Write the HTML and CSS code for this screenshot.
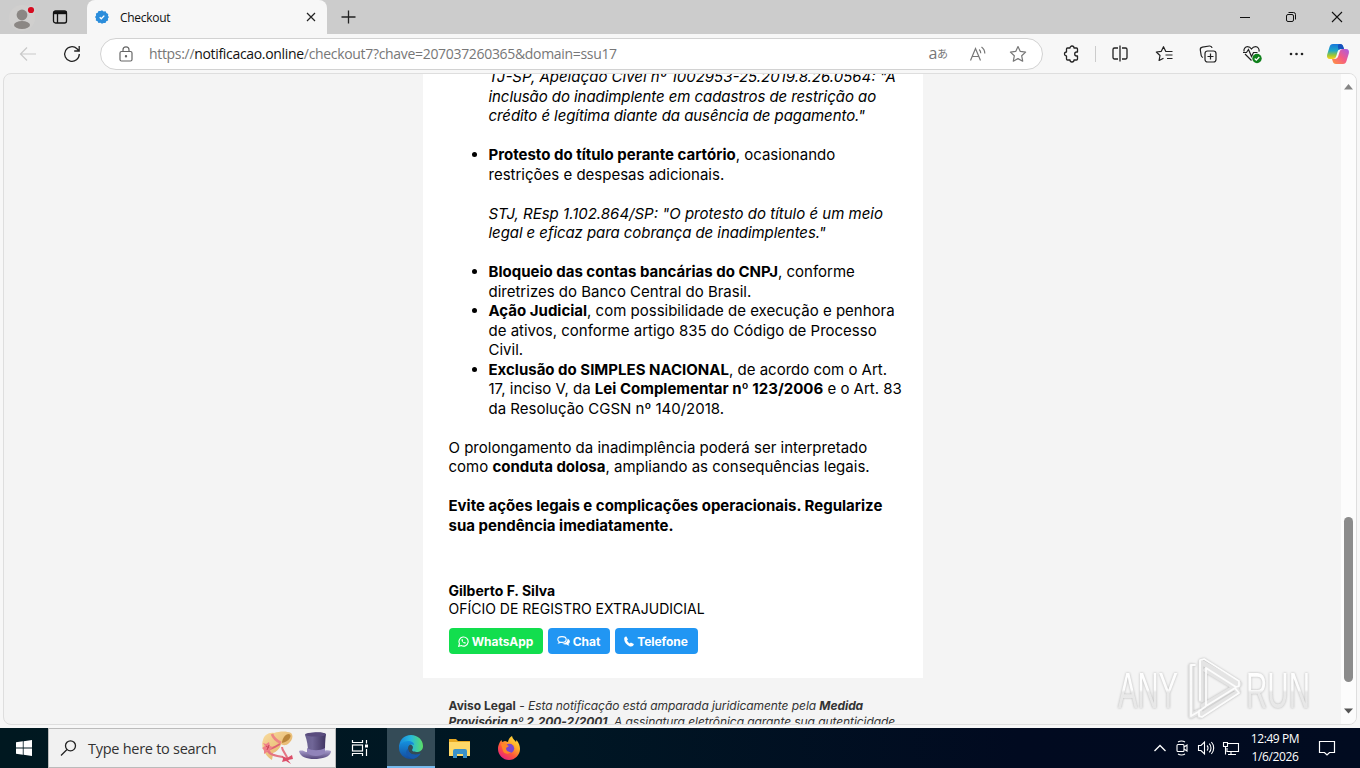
FILE: index.html
```html
<!DOCTYPE html>
<html lang="pt-BR">
<head>
<meta charset="utf-8">
<title>Checkout</title>
<link rel="stylesheet" href="styles.css">
</head>
<body>
<div class="screen">
  <header class="tabbar">
    <div class="cell avatar"><svg width="28" height="30" viewBox="0 0 28 30"><circle cx="14" cy="15" r="13" fill="#d0cfce"/><circle cx="14" cy="12" r="5.400" fill="#8b8784"/><ellipse cx="14" cy="22" rx="8" ry="4" fill="#8b8784"/><circle cx="23" cy="7" r="4.500" fill="#d2d0d0"/><circle cx="23" cy="7" r="3.100" fill="#d60b20"/></svg></div>
    <div class="cell spaces"><svg width="16" height="16" viewBox="0 0 16 16" fill="none" stroke="#111" stroke-width="1.300"><rect x="1.500" y="2" width="13" height="12" rx="2"/><path d="M1.500 3.700h13" stroke-width="3"/><path d="M5.500 4v10"/></svg></div>
    <div class="tab">
      <svg width="14" height="14" viewBox="0 0 14 14"><path d="M7 .3l1.600 1.200 2-.2.800 1.800 1.800.800-.2 2L14 7l-1.100 1.500.2 2-1.800.8-.8 1.800-2-.2L7 13.800l-1.600-1-2 .2-.8-1.800-1.800-.8.2-2L0 7l1.100-1.500-.2-2 1.800-.8.800-1.800 2 .2z" fill="#2b8ddb"/><path d="M4.700 7.200l1.600 1.600 3-3.200" fill="none" stroke="#fff" stroke-width="1.300"/></svg>
      <span class="tab-title">Checkout</span>
      <svg class="tab-close" width="12" height="12" viewBox="0 0 12 12" stroke="#222" stroke-width="1.200"><path d="M2 2l8 8M10 2l-8 8"/></svg>
    </div>
    <div class="cell plus"><svg width="16" height="16" viewBox="0 0 16 16" stroke="#222" stroke-width="1.300"><path d="M8.500 1.500v13M1.500 8h14"/></svg></div>
    <div class="winbtns">
      <svg width="12" height="12" viewBox="0 0 12 12" stroke="#111"><path d="M1 6.500h10"/></svg>
      <svg width="12" height="12" viewBox="0 0 12 12" fill="none" stroke="#111"><rect x="1.500" y="3.500" width="7" height="7" rx="1.500"/><path d="M3.500 1.500h5a2 2 0 0 1 2 2v5"/></svg>
      <svg width="12" height="12" viewBox="0 0 12 12" stroke="#111" stroke-width="1.100"><path d="M1 1l10 10M11 1L1 11"/></svg>
    </div>
  </header>

  <nav class="toolbar">
    <div class="tool"><svg width="18" height="16" viewBox="0 0 18 16" fill="none" stroke="#c9c9c9" stroke-width="1.200"><path d="M17 8H2M8 1.500L1.500 8 8 14.500"/></svg></div>
    <div class="tool"><svg width="18" height="18" viewBox="0 0 18 18" fill="none" stroke="#222" stroke-width="1.300"><path d="M16.300 9A7.300 7.300 0 1 1 14 3.700L16 5.700M16.200 1v5h-5"/></svg></div>
    <div class="address">
      <svg class="lock" width="14" height="16" viewBox="0 0 14 16" fill="none" stroke="#666" stroke-width="1.200"><rect x="1" y="5.500" width="12" height="9.500" rx="1.500"/><path d="M4 5.500V3.800a3 3 0 0 1 6 0v1.700"/><circle cx="7" cy="10.200" r=".6" fill="#666"/></svg>
      <span class="url">https://<b>notificacao.online</b>/checkout7?chave=207037260365&amp;domain=ssu17</span>
      <div class="addr-tool translate">a<small>あ</small></div>
      <div class="addr-tool"><svg width="18" height="16" viewBox="0 0 18 16" fill="none" stroke="#777" stroke-width="1.200"><path d="M1.500 14.500L6.500 2.500l5 12M3.300 10.500h6.500M10.200 3.500a4.500 4.500 0 0 1 1.500 3.700M12.500 1a8 8 0 0 1 3.300 6.500"/></svg></div>
      <div class="addr-tool"><svg width="18" height="18" viewBox="0 0 18 18" fill="none" stroke="#777" stroke-width="1.200" stroke-linejoin="round"><path d="M9 1.500l2.300 4.900 5.300.7-3.900 3.700 1 5.400L9 13.600l-4.700 2.600 1-5.400-3.900-3.700 5.300-.7z"/></svg></div>
    </div>
    <div class="tool ext"><svg width="18" height="18" viewBox="0 0 18 18" fill="none" stroke="#222" stroke-width="1.300" stroke-linejoin="round"><path d="M5.500 3H8a2 2 0 0 1 4 0h2.500a1 1 0 0 1 1 1v3h-.8a2 2 0 0 0 0 4h.8v3a1 1 0 0 1-1 1H12a2 2 0 0 1-4 0H5.500a1 1 0 0 1-1-1v-3a2 2 0 0 1 0-4V4a1 1 0 0 1 1-1z"/></svg></div>
    <span class="divider"></span>
    <div class="tool"><svg width="18" height="18" viewBox="0 0 18 18" fill="none" stroke="#222" stroke-width="1.300"><path d="M7 3H3.500A1.500 1.500 0 0 0 2 4.500v8A1.500 1.500 0 0 0 3.500 14H7M11 3h3.500A1.500 1.500 0 0 1 16 4.500v8a1.500 1.500 0 0 1-1.500 1.500H11M9 .5v16"/></svg></div>
    <div class="tool"><svg width="18" height="18" viewBox="0 0 18 18" fill="none" stroke="#222" stroke-width="1.200" stroke-linejoin="round"><path d="M11 6.500h-.2L8.500 1.700 6.300 6.300l-5 .7L5 10.500l-.9 5 4.400-2.300M11 6.500h6.500M10.500 10h7M12 13.500h5.500"/></svg></div>
    <div class="tool"><svg width="18" height="18" viewBox="0 0 18 18" fill="none" stroke="#222" stroke-width="1.200"><rect x="6" y="6" width="11" height="11" rx="2.500"/><path d="M11.500 8.500v6M8.500 11.500h6M4 12.500a2.500 2.500 0 0 1-1.800-2L1.300 5A2.500 2.500 0 0 1 3.400 2.200l7-1.200a2.500 2.500 0 0 1 2.700 2"/></svg></div>
    <div class="tool"><svg width="20" height="20" viewBox="0 0 20 20" fill="none" stroke="#222" stroke-width="1.200"><path d="M9.500 16.500L3 10M2 7.500C1.500 5 3.300 2.700 5.500 2.700c1.800 0 3 .8 4 2.300 1-1.500 2.200-2.300 4-2.300 2.500 0 4.200 2.500 3.500 5M1 8.500h3.500L6.500 5.500l3 7 2-4h4"/><circle cx="15" cy="14.500" r="4.700" fill="#10801c" stroke="none"/><path d="M12.700 14.500l1.600 1.700 3-3.200" stroke="#fff"/></svg></div>
    <div class="tool"><svg width="16" height="4" viewBox="0 0 16 4" fill="#222"><circle cx="3" cy="2" r="1.300"/><circle cx="8.500" cy="2" r="1.300"/><circle cx="14" cy="2" r="1.300"/></svg></div>
    <div class="tool copilot"><svg width="24" height="22" viewBox="0 0 24 22"><defs><linearGradient id="c1" x1="0" y1="0" x2="0" y2="1"><stop offset="0" stop-color="#1877dc"/><stop offset=".45" stop-color="#20a9c5"/><stop offset=".75" stop-color="#9cc736"/><stop offset="1" stop-color="#ffd21b"/></linearGradient><linearGradient id="c2" x1="1" y1="0" x2="0" y2="1"><stop offset="0" stop-color="#a65ce8"/><stop offset=".5" stop-color="#f45b84"/><stop offset="1" stop-color="#ff963d"/></linearGradient></defs><path d="M7 1h7c2 0 2.700 1 3.200 2.500L18 6h-3c-2 0-3 1-3.500 3l-1.200 4c-.6 2-1.600 3-3.600 3H4c-2.500 0-3.500-2-2.800-4.500L3.500 4C4.100 2 5 1 7 1z" fill="url(#c1)"/><path d="M17 21h-7c-2 0-2.700-1-3.200-2.500L6 16h2.500c2 0 3.200-1 3.800-3l1.200-4c.6-2 1.600-3 3.500-3h3c2.500 0 3.500 2 2.800 4.500L20.500 18c-.6 2-1.500 3-3.500 3z" fill="url(#c2)"/><path d="M14 1c2 0 2.700 1 3.200 2.500L18 6h-3c-1 0-1.800.3-2.400.9L12 4c-.3-1.500 0-3 2-3z" fill="#1852bd"/></svg></div>
  </nav>

  <div class="viewport">
    <main class="page">
      <article class="card">
        <ul>
          <li class="cont"><i>TJ-SP, Apelação Cível nº 1002953-25.2019.8.26.0564: "A<br><span class="tight">inclusão do inadimplente em cadastros de restrição ao<br>crédito é legítima diante da ausência de pagamento."</span></i><br><br></li>
          <li><b>Protesto do título perante cartório</b>, ocasionando<br>restrições e despesas adicionais.<br><br><i>STJ, REsp 1.102.864/SP: "O protesto do título é um meio<br><span class="tight">legal e eficaz para cobrança de inadimplentes."</span></i><br><br></li>
          <li><b>Bloqueio das contas bancárias do CNPJ</b>, conforme<br>diretrizes do Banco Central do Brasil.</li>
          <li><b>Ação Judicial</b>, com possibilidade de execução e penhora<br>de ativos, conforme artigo 835 do Código de Processo<br>Civil.</li>
          <li><b>Exclusão do SIMPLES NACIONAL</b>, de acordo com o Art.<br>17, inciso V, da <b>Lei Complementar nº 123/2006</b> e o Art. 83<br>da Resolução CGSN nº 140/2018.</li>
        </ul>
        <p>O prolongamento da inadimplência poderá ser interpretado<br>como <b>conduta dolosa</b>, ampliando as consequências legais.</p>
        <p><b>Evite ações legais e complicações operacionais. Regularize<br>sua pendência imediatamente.</b></p>
        <div class="sign"><b>Gilberto F. Silva</b><br>OFÍCIO DE REGISTRO EXTRAJUDICIAL</div>
        <div class="buttons">
          <a class="btn whats"><svg width="11" height="11" viewBox="0 0 12 12" fill="none" stroke="#fff" stroke-width="1.200"><path d="M.8 11.200l.8-2.900A5 5 0 1 1 3.600 10.400z"/><path d="M4 3.500c-.8 2 2 5 4.300 4.800l.4-1-1.500-.7-.6.600C5.800 6.900 5.200 6.200 5 5.500l.5-.6-.6-1.500z" fill="#fff" stroke="none"/></svg>WhatsApp</a>
          <a class="btn chat"><svg width="13" height="12" viewBox="0 0 13 12"><path d="M10.500 3.500c3 1.500 3 4 1 5.300 0 .8.500 1.300 1 1.700-1.200 0-2-.3-2.800-1-1.700.3-3.400 0-4.500-.9 3.200 0 5.600-2 5.300-5.100z" fill="#fff"/><path d="M5 1.600c2.400 0 4.200 1.300 4.200 2.900S7.400 7.400 5 7.400c-.5 0-1 0-1.400-.2-.5.400-1.200.7-1.900.8.300-.4.500-.8.500-1.300C1.300 6.200.8 5.400.8 4.500.8 2.900 2.600 1.600 5 1.600z" fill="none" stroke="#fff" stroke-width="1.100"/></svg>Chat</a>
          <a class="btn phone"><svg width="10" height="11" viewBox="0 0 10 11"><path d="M.3 2C.5 1 1.500.5 2.400.5L4 3.500l-1 1.100c.6 1.300 1.500 2.200 2.700 2.800l1.200-1 2.900 1.700c0 1-.5 1.900-1.500 2.200C4.500 11.400-.5 6 .3 2z" fill="#fff"/></svg>Telefone</a>
        </div>
      </article>
      <footer class="legal"><b>Aviso Legal</b> - <i>Esta notificação está amparada juridicamente pela <b>Medida<br>Provisória nº 2.200-2/2001</b>. A assinatura eletrônica garante sua autenticidade</i></footer>
    </main>
    <div class="scroll">
      <svg width="9" height="6" viewBox="0 0 9 6"><path d="M0 5.500L4.500 0 9 5.500z" fill="#858585"/></svg>
      <span class="thumb"></span>
      <svg class="down" width="9" height="6" viewBox="0 0 9 6"><path d="M0 .5L4.500 5.500 9 .5z" fill="#555"/></svg>
    </div>
  </div>

  <footer class="taskbar">
    <div class="start"><svg width="16" height="16" viewBox="0 0 16 16" fill="#fff"><path d="M0 2.300L6.800 1.300v6.300H0zM7.600 1.200L16 0v7.600H7.600zM0 8.400h6.800v6.300L0 13.700zM7.600 8.400H16V16l-8.400-1.200z"/></svg></div>
    <div class="search">
      <svg width="18" height="18" viewBox="0 0 18 18" fill="none" stroke="#222" stroke-width="1.300"><circle cx="10.500" cy="6.800" r="5"/><path d="M7 10.500L1 16.500"/></svg>
      <span class="hint">Type here to search</span>
      <svg class="hats" width="72" height="36" viewBox="0 0 72 36">
        <defs><linearGradient id="s1" x1="0" y1="0" x2="1" y2="1"><stop offset="0" stop-color="#f9dda0"/><stop offset="1" stop-color="#dfa95c"/></linearGradient><linearGradient id="p1"><stop offset="0" stop-color="#69608f"/><stop offset=".35" stop-color="#706697"/><stop offset="1" stop-color="#403460"/></linearGradient><linearGradient id="p2" x1="0" y1="0" x2="0" y2="1"><stop offset="0" stop-color="#aaa0ce"/><stop offset="1" stop-color="#55477c"/></linearGradient></defs>
        <path d="M2 10C3 5 8 2 13 3c6-2 13-2 17 0 3 3 1 8-3 11-3 2-6 1-7 0-1 5-5 8-8 9 0 3-1 6-1 7C5 27-1 17 2 10z" fill="url(#s1)"/>
        <path d="M21 13c0-4 3-9 7-9 4 1 0 8-7 9z" fill="#b98439"/>
        <path d="M11 4c1 3 5 7 9 9" fill="none" stroke="#ed8584" stroke-width="2.600"/>
        <path d="M19 14c-3 2-7 4-10 5" fill="none" stroke="#df6273" stroke-width="2"/>
        <path d="M2 13l3 1 3-2 1 4 3 1-3 3 1 3-4-1-3 2 0-4-2-2 3-2z" fill="#ef8188"/><path d="M5 16l3 2M8 15l-2 5" stroke="#cc4459"/>
        <path d="M7 21c2 4 8 5 15 6M21 17c0 4 4 6 6 13" fill="none" stroke="#e47583" stroke-width="2"/>
        <path d="M21 26l5 2 5-3 1 4-5 1 3 4-5-3-4 1 1-3z" fill="#dc4e69"/>
        <path d="M38 21c3-1 5 0 7 1h16c3-2 6-2 9-1 0 6-9 8-17 8-7 0-14-2-15-8z" fill="url(#p2)"/>
        <path d="M44 5c3-3 18-4 21-1-1 6-1 13-1 18-4 3-13 3-17 0 0-6-1-12-3-17z" fill="url(#p1)"/><path d="M46 18c5 3 13 3 18 0v5c-5 4-13 4-18 0z" fill="#9184ba"/><ellipse cx="54.500" cy="4.500" rx="10.500" ry="2" fill="#5a4c7e"/>
      </svg>
    </div>
    <div class="task"><svg width="18" height="18" viewBox="0 0 18 18" fill="none" stroke="#fff" stroke-width="1.200"><path d="M1.500 1v2.500h10V1M1.500 17v-2.500h10V17M15.500 1v3.500M15.500 10v7"/><rect x="1.500" y="6" width="10" height="6"/><path d="M14 7h3" stroke-width="3"/></svg></div>
    <div class="task active"><svg width="26" height="26" viewBox="0 0 26 26"><defs><linearGradient id="e1"><stop offset="0" stop-color="#1686dc"/><stop offset=".5" stop-color="#27b9dc"/><stop offset="1" stop-color="#5bde65"/></linearGradient><linearGradient id="e2" x1="0" y1="0" x2="0" y2="1"><stop offset="0" stop-color="#1591df"/><stop offset="1" stop-color="#134ca0"/></linearGradient></defs><path d="M1 14C1 6 6 1 13 1c7 0 12 5 12 11 0 4-3 6-6.500 6-3 0-5-1.200-4.300-2.400 2-3-.2-5.600-4.200-5.600-5 0-8 2-9 4z" fill="url(#e1)"/><path d="M1 14c0-4 4-7 9-7 4 0 6 2 6 4-3-2-6 0-6 3.500 0 5 6 8 12.500 5C20 23.500 17 25 13 25 6 25 1 20 1 14z" fill="url(#e2)"/><path d="M10 14.500c0 5 6 8 12.500 5-1.500 2.500-4 4.500-7 5.300C9 24 6 18 10 14.500z" fill="#1759ab"/></svg></div>
    <div class="task explorer"><svg width="22" height="20" viewBox="0 0 22 20"><path d="M0 1h7l2 2h12v15H0z" fill="#e8a922"/><path d="M0 4h21v14H0z" fill="#ffd968"/><path d="M4 20v-7a2 2 0 0 1 2-2h10a2 2 0 0 1 2 2v7h-4v-4H8v4z" fill="#3b91c8"/></svg></div>
    <div class="task firefox"><svg width="24" height="24" viewBox="0 0 24 24"><defs><linearGradient id="f1" x1="1" y1="0" x2=".3" y2="1"><stop offset="0" stop-color="#fff148"/><stop offset=".4" stop-color="#ffad28"/><stop offset=".7" stop-color="#ff563b"/><stop offset="1" stop-color="#e7237c"/></linearGradient></defs><path d="M2 8c.7-2 1.500-3 2.500-4L5 6l3-1c1 0 2 .8 3 1 .5-3 2-5 4-6 .5 3 3 4 4 6l.5-2C22 7 23 10 23 13c0 6-5 11-11 11S1 19 1 13c0-2 .3-3.500 1-5z" fill="url(#f1)"/><circle cx="12.500" cy="12.500" r="4.700" fill="#7947cf"/><path d="M4 8c4-1 5 1 8 2l-3 2c0 3 2 4 5 4-2 3-7 2-8-1z" fill="#ff8727"/></svg></div>
    <div class="tray">
      <svg width="14" height="16" viewBox="0 0 14 16" fill="none" stroke="#fff" stroke-width="1.300"><path d="M1.500 11L7 5.500l5.500 5.500"/></svg>
      <svg width="16" height="16" viewBox="0 0 16 16" fill="none" stroke="#fff" stroke-width="1.100"><rect x="3" y="4.500" width="7" height="7" rx="1"/><path d="M10 7l3-2v6l-3-2M4 2c2-1.200 5-1.200 7 0M4 14c2 1.200 5 1.200 7 0"/></svg>
      <svg width="18" height="16" viewBox="0 0 18 16" fill="none" stroke="#fff" stroke-width="1.100"><path d="M1.500 5.500H4L7.500 2v12L4 10.500H1.500zM10 5.500a3.500 3.500 0 0 1 0 5M12.200 3.700a6 6 0 0 1 0 8.600M14.400 2a9 9 0 0 1 0 12"/></svg>
      <svg width="18" height="16" viewBox="0 0 18 16" fill="none" stroke="#fff" stroke-width="1.100"><path d="M6 3.500h10.500v8H5V8M9 11.500V14M6 14.500h8M1.500 2.500h4v4h-4zM3.500 6.500v8"/></svg>
    </div>
    <div class="clock"><span>12:49 PM</span><span>1/6/2026</span></div>
    <div class="notif"><svg width="18" height="18" viewBox="0 0 18 18" fill="none" stroke="#fff" stroke-width="1.200"><path d="M1.500 2.500h15v11h-5L9 16l-2.500-2.500h-5z"/></svg></div>
  </footer>

  <div class="watermark">
    <svg width="204" height="70" viewBox="0 0 204 70">
      <defs><linearGradient id="wm" x1="0" y1="0" x2="0" y2="1"><stop offset="0" stop-color="#fff"/><stop offset=".48" stop-color="#fcfcfc"/><stop offset=".52" stop-color="#e9e9e9"/><stop offset="1" stop-color="#e6e6e6"/></linearGradient></defs>
      <g fill="url(#wm)" font-family="Liberation Sans Narrow, Liberation Sans, sans-serif" font-size="50">
        <text x="5" y="54" textLength="60" lengthAdjust="spacingAndGlyphs">ANY</text>
        <text x="133" y="54" textLength="64" lengthAdjust="spacingAndGlyphs">RUN</text>
      </g>
      <g fill="none" stroke-linejoin="round" stroke-linecap="round">
        <path d="M78 12v50l7-4M88 46V8l38 22-3 4-30-18M87 57v5l38-24-3-5-32 19" stroke="#e4e4e4" stroke-width="5"/>
        <path d="M82 11h-4v51l7-4M87 46V6l4-1 35 22v5l-3 1-30-19v38l29-18 4 5-37 24-3-1v-5l6-4" stroke="#fcfcfc" stroke-width="1.800"/>
      </g>
    </svg>
  </div>
</div>
</body>
</html>
```
FILE: styles.css
```css
* { box-sizing: border-box; }
body { margin: 0; overflow: hidden; font-family: "Open Sans", "Noto Sans", sans-serif; }
svg { display: block; flex: none; }
.screen { position: relative; width: 1360px; height: 768px; display: flex; flex-direction: column; background: #f7f7f7; overflow: hidden; }

.tabbar { height: 34px; flex: none; display: flex; background: #ccc; }
.cell { display: flex; align-items: center; justify-content: center; height: 34px; }
.avatar { width: 44px; padding-top: 2px; }
.spaces { width: 32px; }
.tab { width: 240px; margin-left: 11px; height: 34px; padding: 0 10px 0 8px; display: flex; align-items: center; background: #f7f7f7; border-radius: 8px 8px 0 0; }
.tab-title { margin-left: 11px; font-size: 12px; letter-spacing: -.3px; color: #111; }
.tab-close { margin-left: auto; }
.plus { width: 42px; }
.winbtns { margin-left: auto; width: 138px; display: flex; align-items: center; justify-content: space-around; }

.toolbar { height: 39px; flex: none; display: flex; align-items: center; padding-left: 6px; }
.tool { width: 44px; flex: none; display: flex; align-items: center; justify-content: center; }
.address { width: 943px; height: 32px; flex: none; margin: 0 6px; padding: 0 4px 0 18px; display: flex; align-items: center; background: #fff; border: 1px solid #d2d2d2; border-radius: 16px; }
.url { margin-left: 16px; font-size: 14px; letter-spacing: -.32px; white-space: nowrap; color: #777; margin-right: auto; }
.url b { font-weight: 400; color: #111; }
.addr-tool { width: 40px; display: flex; align-items: center; justify-content: center; color: #777; }
.translate { font-size: 16px; line-height: 16px; padding-bottom: 2px; letter-spacing: -.5px; }
.translate small { font-family: "Noto Sans CJK JP", sans-serif; font-size: 11px; line-height: 10px; }
.divider { width: 1px; height: 16px; margin: 0 2px; background: #ccc; }
.copilot { width: 42px; margin-left: -1px; }

.viewport { height: 652px; flex: none; margin: 0 3px; display: flex; overflow: hidden; background: #f4f4f4; border: 1px solid #dedede; border-radius: 8px; }
.page { flex: 1; display: flex; flex-direction: column; align-items: center; font-family: Inter, sans-serif; color: #000; }
.card { width: 500px; height: 611px; flex: none; margin-top: -7px; padding: 0 0 0 26px; background: #fff; font-size: 15px; line-height: 19.5px; white-space: nowrap; }
.card ul { margin: 0 0 19.5px; padding-left: 40px; }
.card .cont { list-style: none; }
.card p { margin: 0 0 19.5px; }
.card b { font-weight: 700; }
.tight { letter-spacing: -.07px; }
.sign { margin-top: 47px; font-size: 14px; line-height: 18.2px; }
.buttons { display: flex; gap: 5px; margin-top: 10px; }
.btn { height: 26px; display: flex; align-items: center; justify-content: center; gap: 3px; border-radius: 4px; background: #2196f3; color: #fff; font-size: 12px; font-weight: 700; letter-spacing: -.05px; }
.whats { width: 94px; background: #12de4e; }
.chat { width: 62px; }
.phone { width: 83px; }
.legal { width: 500px; margin-top: 20px; padding-left: 26px; font-size: 12px; line-height: 15.6px; color: #333; white-space: nowrap; }
.legal i { letter-spacing: -.07px; }
.scroll { width: 15px; flex: none; padding-top: 10px; display: flex; flex-direction: column; align-items: center; background: #fcfcfc; }
.thumb { width: 9px; height: 165px; margin-top: 427px; border-radius: 5px; background: #8b8b8b; }
.down { margin-top: 26px; }

.taskbar { margin-top: auto; height: 40px; flex: none; display: flex; background: linear-gradient(90deg, #001820 0, #001724 40%, #010a20 75%, #010b20 100%); }
.start { width: 48px; display: flex; align-items: center; justify-content: center; }
.search { width: 288px; padding: 0 2px 0 11px; display: flex; align-items: center; background: #f1f1f1; border: 1px solid #bbb; }
.hint { margin-left: 10px; font-size: 14.5px; letter-spacing: -.27px; white-space: nowrap; color: #333; }
.hats { margin-left: auto; }
.task { width: 48px; display: flex; align-items: center; justify-content: center; }
.active { margin-left: 3px; background: #344b57; border-bottom: 2px solid #76b9ed; }
.explorer { width: 49px; }
.firefox { width: 49px; }
.tray { margin-left: auto; display: flex; align-items: center; gap: 7px; }
.clock { width: 70px; display: flex; flex-direction: column; align-items: center; justify-content: center; color: #fff; font-size: 12px; line-height: 18px; letter-spacing: -.4px; }
.notif { width: 50px; padding-right: 17px; display: flex; align-items: center; justify-content: center; }

.watermark { position: absolute; left: 1113px; top: 654px; filter: drop-shadow(0 0 1px #b5b5b5); }
```
